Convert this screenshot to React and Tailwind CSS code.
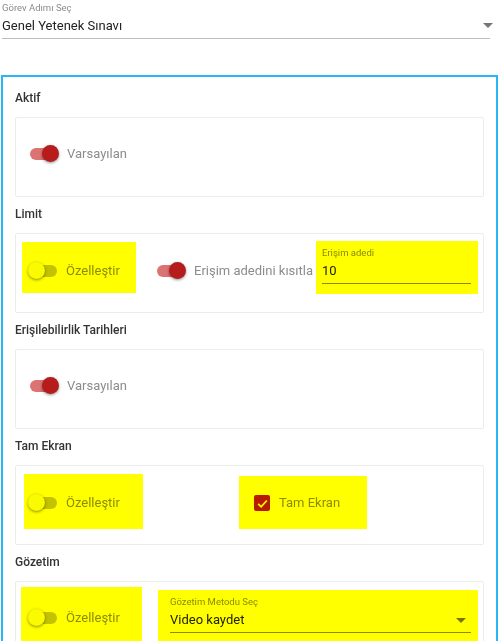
import React from 'react';

// yellow highlight laid over a control, multiplied into what's under it
function Mark({ className = '', children }) {
  return (
    <div className={`relative shrink-0 ${className}`}>
      {children}
      <div className="pointer-events-none absolute inset-0 bg-[#ffff00] mix-blend-multiply" />
    </div>
  );
}

function Switch({ on }) {
  return (
    <div className="relative h-[20px] w-[28px] shrink-0">
      <div
        className={`absolute left-0 top-[4px] h-[12px] w-[28px] rounded-full ${
          on ? 'bg-[#dc7373]' : 'bg-[#c2c2c2]'
        }`}
      />
      <div
        className={`absolute top-[1px] h-[17px] w-[17px] rounded-full shadow-[0_1px_3px_rgba(0,0,0,0.45)] ${
          on ? 'left-[12px] bg-[#b71c1c]' : 'left-[-1px] bg-[#fafafa]'
        }`}
      />
    </div>
  );
}

function SwitchRow({ on, label }) {
  return (
    <div className="flex h-[20px] items-center">
      <Switch on={on} />
      <span className="ml-[9px] whitespace-nowrap text-[13px] text-[#8c8c8c]">{label}</span>
    </div>
  );
}

function Arrow() {
  return <div className="h-0 w-0 border-x-[5px] border-t-[5px] border-x-transparent border-t-[#757575]" />;
}

function Section({ title, children, className = '' }) {
  return (
    <div>
      <div className="mb-[11px] text-[12px] font-medium leading-4 text-[#333333]">{title}</div>
      <div className={`mb-[9px] h-[80px] rounded-[2px] border border-[#ececec] ${className}`}>{children}</div>
    </div>
  );
}

export default function App() {
  return (
    <div className="min-h-[641px] w-[500px] bg-white font-['Roboto',sans-serif]">
      {/* step select */}
      <div className="w-[490px] pl-[2px] pt-[2px]">
        <div className="h-[12px] text-[9.5px] leading-[12px] text-[#8a8a8a]">Görev Adımı Seç</div>
        <div className="flex h-[25px] items-center justify-between border-b border-[#bdbdbd] pb-[1px]">
          <span className="text-[13px] text-[#222222]">Genel Yetenek Sınavı</span>
          <div className="mr-[-3px]">
            <Arrow />
          </div>
        </div>
      </div>

      <div className="ml-[1px] mt-[36px] w-[497px] border-2 border-[#29b6f6] px-3 pt-[13px]">
        <Section title="Aktif" className="pl-[14px] pt-[26px]">
          <SwitchRow on label="Varsayılan" />
        </Section>

        <Section title="Limit" className="flex items-start pl-[6px] pr-[5px] pt-[8px]">
          <Mark className="h-[51px] w-[114px] pl-[7px] pt-[19px]">
            <SwitchRow label="Özelleştir" />
          </Mark>
          <div className="ml-[21px] pt-[19px]">
            <SwitchRow on label="Erişim adedini kısıtla" />
          </div>
          <Mark className="ml-auto mt-[-1px] h-[53px] w-[162px] pl-[6px] pr-[7px] pt-[6px]">
            <div className="text-[9.5px] leading-[12px] text-[#8a8a8a]">Erişim adedi</div>
            <div className="h-[25px] border-b border-[#8a8a8a] text-[13px] leading-[24px] text-[#222222]">10</div>
          </Mark>
        </Section>

        <Section title="Erişilebilirlik Tarihleri" className="pl-[14px] pt-[26px]">
          <SwitchRow on label="Varsayılan" />
        </Section>

        <Section title="Tam Ekran" className="flex items-start pl-[8px] pt-[8px]">
          <Mark className="h-[55px] w-[119px] pl-[5px] pt-[19px]">
            <SwitchRow label="Özelleştir" />
          </Mark>
          <Mark className="ml-[96px] mt-[2px] h-[53px] w-[128px] pl-[15px] pt-[19px]">
            <div className="flex h-[16px] items-center">
              <div className="flex h-[16px] w-[16px] items-center justify-center rounded-[2px] bg-[#b71c1c]">
                <svg viewBox="0 0 24 24" className="h-[13px] w-[13px]" fill="none" stroke="#ffffff" strokeWidth="3.2">
                  <polyline points="4,12.5 9.5,18 20,6.5" />
                </svg>
              </div>
              <span className="ml-[9px] whitespace-nowrap text-[13px] text-[#8c8c8c]">Tam Ekran</span>
            </div>
          </Mark>
        </Section>

        <Section title="Gözetim" className="flex items-start pl-[5px] pt-[5px]">
          <Mark className="h-[56px] w-[121px] pl-[8px] pt-[21px]">
            <SwitchRow label="Özelleştir" />
          </Mark>
          <Mark className="ml-[16px] mt-[3px] h-[53px] w-[320px] pl-[12px] pr-[7px] pt-[6px]">
            <div className="text-[9.5px] leading-[12px] text-[#8a8a8a]">Gözetim Metodu Seç</div>
            <div className="flex h-[25px] items-center justify-between border-b border-[#8a8a8a] pr-[5px]">
              <span className="text-[13px] text-[#222222]">Video kaydet</span>
              <Arrow />
            </div>
          </Mark>
        </Section>
      </div>
    </div>
  );
}
